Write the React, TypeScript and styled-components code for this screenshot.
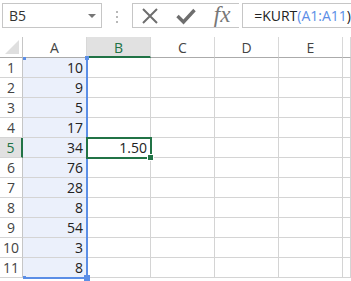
import { Fragment } from 'react';
import styled, { createGlobalStyle } from 'styled-components';

const GlobalStyle = createGlobalStyle`
  html, body {
    margin: 0;
    padding: 0;
    background: #ffffff;
  }
  body {
    font-family: "Open Sans", "Liberation Sans", sans-serif;
    overflow: hidden;
  }
`;

const COL_W = 64;
const ROW_H = 20;
const HEAD_W = 23;
const HEAD_H = 21;
const GREEN = '#217346';
const BLUE = '#5b8ee6';

const Page = styled.div`
  width: 351px;
  height: 281px;
  overflow: hidden;
`;

const FormulaBar = styled.div`
  display: flex;
  align-items: flex-start;
  height: 37px;
  padding: 3px 0 0 2px;
  box-sizing: border-box;
`;

const NameBox = styled.div`
  display: flex;
  align-items: center;
  justify-content: space-between;
  width: 102px;
  height: 25px;
  box-sizing: border-box;
  border: 1px solid #c6c6c6;
  padding: 0 5px 0 6px;
  font-size: 14px;
  color: #333;
`;

const Caret = styled.span`
  width: 0;
  height: 0;
  border-left: 4px solid transparent;
  border-right: 4px solid transparent;
  border-top: 4px solid #767676;
`;

const Dots = styled.div`
  display: flex;
  flex-direction: column;
  gap: 3px;
  margin: 8px 14px 0 14px;
  span {
    width: 2px;
    height: 2px;
    background: #b8b8b8;
  }
`;

const ButtonBox = styled.div`
  display: flex;
  align-items: center;
  width: 110px;
  height: 25px;
  box-sizing: border-box;
  border: 1px solid #c6c6c6;
  border-right: none;
  padding-left: 8px;
  gap: 17px;
`;

const Fx = styled.span`
  font-family: "Liberation Serif", "DejaVu Serif", serif;
  font-style: italic;
  font-size: 23px;
  color: #777;
  line-height: 1;
  margin-top: -3px;
  margin-left: 1px;
`;

const FormulaInput = styled.div`
  flex: 1;
  height: 25px;
  box-sizing: border-box;
  border: 1px solid #c6c6c6;
  border-right: none;
  margin-left: 3px;
  padding-left: 11px;
  display: flex;
  align-items: center;
  font-size: 14px;
  color: #222;
  white-space: nowrap;
`;

const Ref = styled.span`
  color: ${BLUE};
`;

const Sheet = styled.div`
  position: relative;
  display: grid;
  grid-template-columns: ${HEAD_W}px repeat(5, ${COL_W}px) 1fr;
  grid-template-rows: ${HEAD_H}px;
  grid-auto-rows: ${ROW_H}px;
`;

const Corner = styled.div`
  position: relative;
  border-right: 1px solid #c6c6c6;
  border-bottom: 1px solid #ababab;
  &::after {
    content: '';
    position: absolute;
    right: 3px;
    bottom: 3px;
    width: 0;
    height: 0;
    border-left: 14px solid transparent;
    border-bottom: 14px solid #dfdfdf;
  }
`;

const ColHead = styled.div<{ $active?: boolean }>`
  display: flex;
  align-items: center;
  justify-content: center;
  box-sizing: border-box;
  font-size: 14px;
  color: ${({ $active }) => ($active ? GREEN : '#444')};
  background: ${({ $active }) => ($active ? '#e1e1e1' : '#fff')};
  border-right: 1px solid #d8d8d8;
  border-bottom: ${({ $active }) => ($active ? `2px solid ${GREEN}` : '1px solid #ababab')};
  padding-top: ${({ $active }) => ($active ? '1px' : '0')};
`;

const RowHead = styled.div<{ $active?: boolean }>`
  display: flex;
  align-items: center;
  justify-content: center;
  box-sizing: border-box;
  font-size: 14px;
  color: ${({ $active }) => ($active ? GREEN : '#444')};
  background: ${({ $active }) => ($active ? '#e1e1e1' : '#fff')};
  border-right: ${({ $active }) => ($active ? `2px solid ${GREEN}` : '1px solid #c6c6c6')};
  border-bottom: 1px solid #d4d4d4;
`;

const Cell = styled.div<{ $ref?: boolean }>`
  display: flex;
  align-items: center;
  justify-content: flex-end;
  box-sizing: border-box;
  padding-right: 3px;
  font-size: 14px;
  color: #222;
  background: ${({ $ref }) => ($ref ? '#ebf0fb' : '#fff')};
  border-right: 1px solid #d4d4d4;
  border-bottom: 1px solid #d4d4d4;
`;

const RangeBox = styled.div`
  position: absolute;
  box-sizing: border-box;
  border-right: 2px solid ${BLUE};
  border-bottom: 2px solid ${BLUE};
  pointer-events: none;
`;

const Handle = styled.span<{ $size: number }>`
  position: absolute;
  width: ${({ $size }) => $size}px;
  height: ${({ $size }) => $size}px;
  background: ${BLUE};
`;

const ActiveBox = styled.div`
  position: absolute;
  box-sizing: border-box;
  border: 2px solid ${GREEN};
  pointer-events: none;
  &::after {
    content: '';
    position: absolute;
    right: -4px;
    bottom: -4px;
    width: 5px;
    height: 5px;
    background: ${GREEN};
    border: 1px solid #fff;
  }
`;

const COLS = ['A', 'B', 'C', 'D', 'E', ''];
const DATA = [10, 9, 5, 17, 34, 76, 28, 8, 54, 3, 8];
const ACTIVE_ROW = 5;

const CancelIcon = () => (
  <svg width="18" height="18" viewBox="0 0 18 18">
    <path d="M2 2 L16 16 M16 2 L2 16" stroke="#6e6e6e" strokeWidth="2" fill="none" />
  </svg>
);

const CheckIcon = () => (
  <svg width="20" height="18" viewBox="0 0 20 18">
    <path d="M1.5 9 L7.5 15 L18.5 3" stroke="#6e6e6e" strokeWidth="3.4" fill="none" />
  </svg>
);

export default function App() {
  return (
    <Page>
      <GlobalStyle />
      <FormulaBar>
        <NameBox>
          <span>B5</span>
          <Caret />
        </NameBox>
        <Dots>
          <span />
          <span />
          <span />
        </Dots>
        <ButtonBox>
          <CancelIcon />
          <CheckIcon />
          <Fx>fx</Fx>
        </ButtonBox>
        <FormulaInput>
          =KURT<Ref>(A1:A11</Ref>)
        </FormulaInput>
      </FormulaBar>
      <Sheet>
        <Corner />
        {COLS.map((c, i) => (
          <ColHead key={i} $active={c === 'B'}>
            {c}
          </ColHead>
        ))}
        {DATA.map((v, r) => (
          <Fragment key={r}>
            <RowHead $active={r + 1 === ACTIVE_ROW}>{r + 1}</RowHead>
            <Cell $ref>{v}</Cell>
            <Cell>{r + 1 === ACTIVE_ROW ? '1.50' : ''}</Cell>
            <Cell />
            <Cell />
            <Cell />
            <Cell />
          </Fragment>
        ))}
        <RangeBox
          style={{
            left: HEAD_W,
            top: HEAD_H,
            width: COL_W + 1,
            height: DATA.length * ROW_H + 1,
          }}
        >
          <Handle $size={3} style={{ left: 0, top: -1 }} />
          <Handle $size={4} style={{ right: -3, top: -2 }} />
          <Handle $size={3} style={{ left: 0, bottom: -2 }} />
          <Handle $size={6} style={{ right: -4, bottom: -4 }} />
        </RangeBox>
        <ActiveBox
          style={{
            left: HEAD_W + COL_W - 1,
            top: HEAD_H + (ACTIVE_ROW - 1) * ROW_H - 1,
            width: COL_W + 2,
            height: ROW_H + 2,
          }}
        />
      </Sheet>
    </Page>
  );
}
